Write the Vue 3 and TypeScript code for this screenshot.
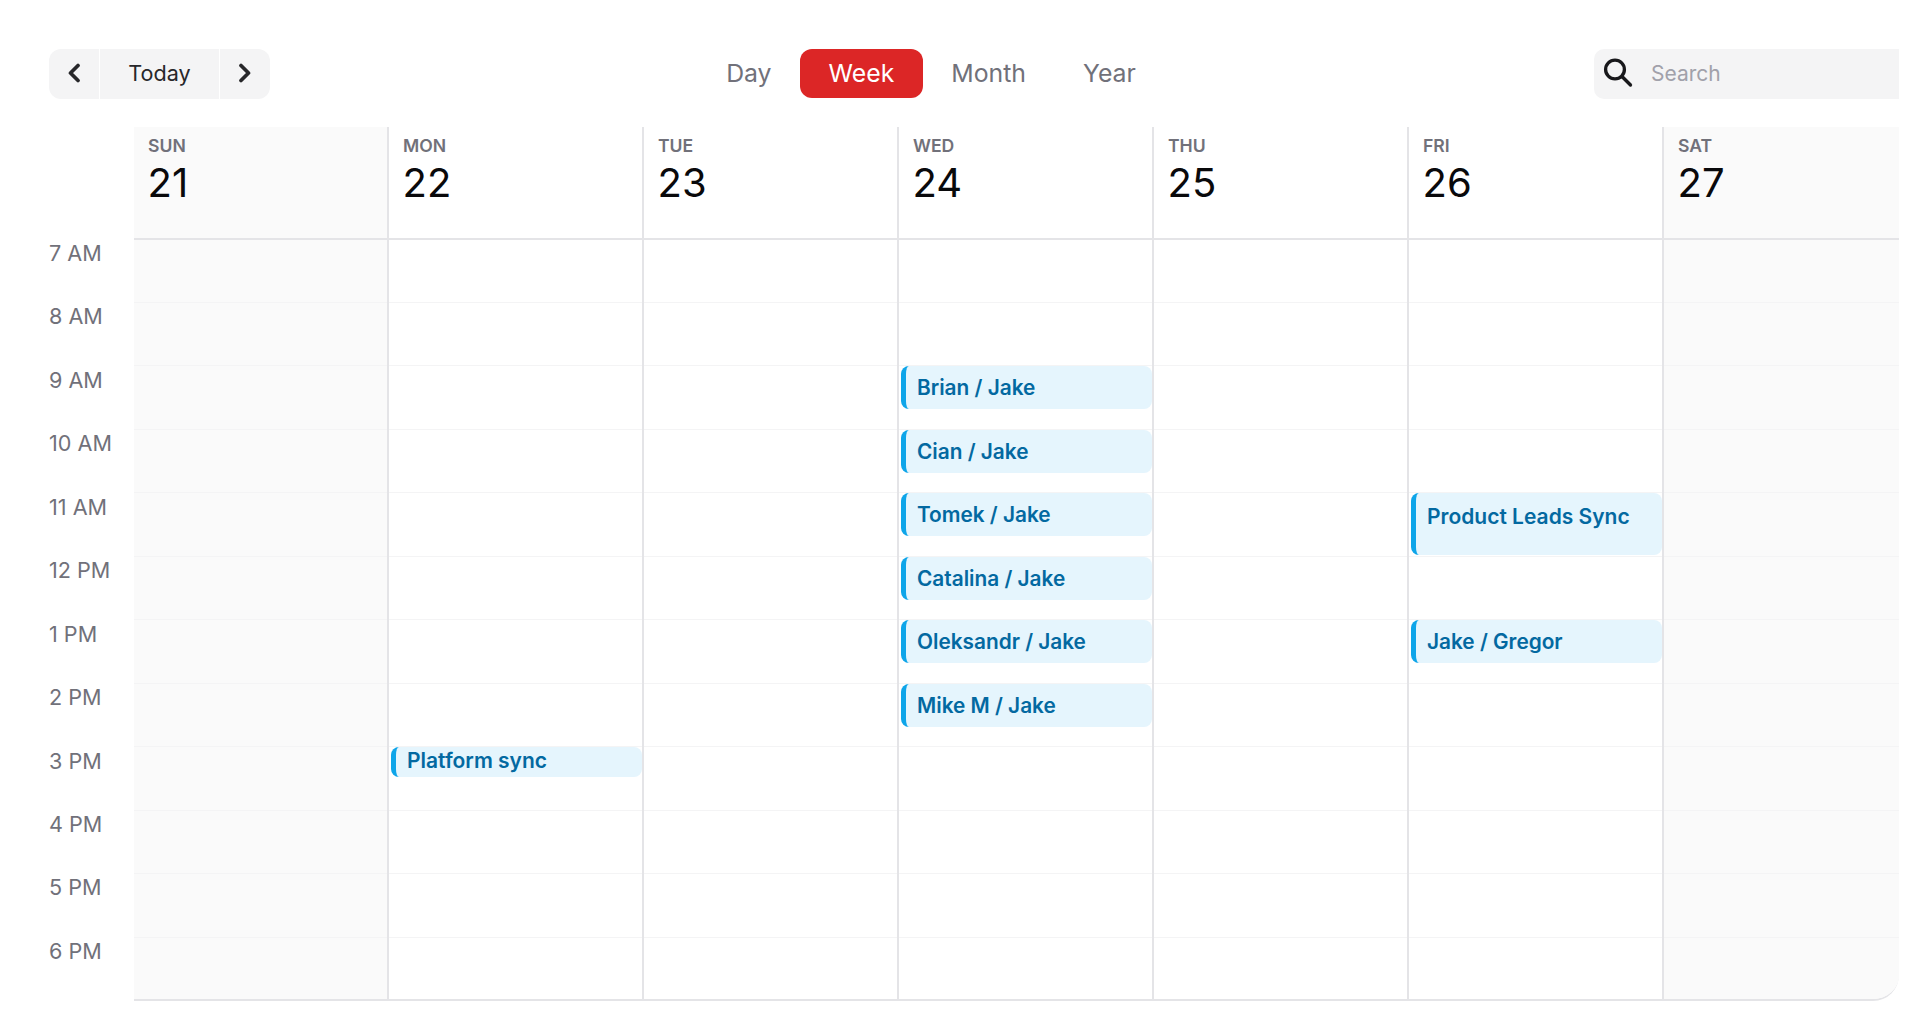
<script setup lang="ts">
interface CalEvent { title: string; size?: 'small' | 'tall' }
interface Day { name: string; date: number; weekend?: boolean; events: Record<number, CalEvent> }

const hours: string[] = ['7 AM','8 AM','9 AM','10 AM','11 AM','12 PM','1 PM','2 PM','3 PM','4 PM','5 PM','6 PM']
const tabs: string[] = ['Day','Week','Month','Year']

const days: Day[] = [
  { name: 'SUN', date: 21, weekend: true, events: {} },
  { name: 'MON', date: 22, events: { 8: { title: 'Platform sync', size: 'small' } } },
  { name: 'TUE', date: 23, events: {} },
  { name: 'WED', date: 24, events: {
    2: { title: 'Brian / Jake' }, 3: { title: 'Cian / Jake' }, 4: { title: 'Tomek / Jake' },
    5: { title: 'Catalina / Jake' }, 6: { title: 'Oleksandr / Jake' }, 7: { title: 'Mike M / Jake' }
  } },
  { name: 'THU', date: 25, events: {} },
  { name: 'FRI', date: 26, events: { 4: { title: 'Product Leads Sync', size: 'tall' }, 6: { title: 'Jake / Gregor' } } },
  { name: 'SAT', date: 27, weekend: true, events: {} }
]
</script>

<template>
  <div class="page">
    <header class="toolbar">
      <div class="nav">
        <button class="nav-btn arrow" aria-label="Previous">
          <svg width="14" height="20" viewBox="0 0 14 20" fill="none"><path d="M11 2.5 3.5 10l7.5 7.5" stroke="#27272a" stroke-width="3.7" stroke-linecap="round" stroke-linejoin="round"/></svg>
        </button>
        <button class="nav-btn today">Today</button>
        <button class="nav-btn arrow" aria-label="Next">
          <svg width="14" height="20" viewBox="0 0 14 20" fill="none"><path d="M3 2.5 10.5 10 3 17.5" stroke="#27272a" stroke-width="3.7" stroke-linecap="round" stroke-linejoin="round"/></svg>
        </button>
      </div>
      <nav class="tabs">
        <button v-for="t in tabs" :key="t" class="tab" :class="{ active: t === 'Week' }">{{ t }}</button>
      </nav>
      <label class="search">
        <svg width="32" height="32" viewBox="0 0 32 32" fill="none"><circle cx="13" cy="12.5" r="9.4" stroke="#18181b" stroke-width="3.3"/><path d="m20.5 20 8 8" stroke="#18181b" stroke-width="3.3" stroke-linecap="round"/></svg>
        <input class="search-input" type="text" placeholder="Search" />
      </label>
    </header>

    <section class="calendar">
      <div class="gutter">
        <div v-for="h in hours" :key="h" class="time">{{ h }}</div>
      </div>
      <div class="days">
        <div v-for="d in days" :key="d.name" class="day" :class="{ weekend: d.weekend }">
          <div class="day-head">
            <div class="day-name">{{ d.name }}</div>
            <div class="day-date">{{ d.date }}</div>
          </div>
          <div v-for="(h, i) in hours" :key="h" class="cell">
            <div v-if="d.events[i]" class="event" :class="d.events[i].size">{{ d.events[i].title }}</div>
          </div>
        </div>
      </div>
    </section>
  </div>
</template>

<style>
html, body { margin: 0; background: #fff; }
</style>

<style scoped>
.page {
  height: 1022px;
  box-sizing: border-box;
  padding: 49px 21px 0 49px;
  overflow: hidden;
  font-family: Inter, "Liberation Sans", sans-serif;
}
button { font-family: inherit; border: 0; cursor: pointer; }
.toolbar {
  display: flex;
  justify-content: space-between;
  align-items: flex-start;
  height: 50px;
  margin-bottom: 28px;
}
.nav {
  display: flex;
  width: 221px;
  height: 50px;
  gap: 1px;
  border-radius: 12px;
  overflow: hidden;
}
.nav-btn {
  display: flex;
  align-items: center;
  justify-content: center;
  padding: 0 0 2px;
  background: #f4f4f5;
  color: #27272a;
  font-size: 21.6px;
}
.arrow { width: 50px; }
.today { flex: 1; }
.tabs { display: flex; margin-left: -2px; }
.tab {
  height: 49px;
  padding: 0 28.5px 1px;
  background: none;
  border-radius: 12px;
  color: #71717a;
  font-size: 24.8px;
}
.tab.active { background: #dc2626; color: #fff; }
.search {
  display: flex;
  align-items: center;
  gap: 17px;
  width: 305px;
  height: 50px;
  box-sizing: border-box;
  padding: 0 0 2px 8px;
  background: #f4f4f5;
  border-radius: 10px 0 0 10px;
}
.search-input {
  flex: 1;
  min-width: 0;
  border: 0;
  outline: 0;
  background: none;
  padding: 0;
  font: 400 21px Inter, "Liberation Sans", sans-serif;
  color: #27272a;
}
.search-input::placeholder { color: #a1a1aa; opacity: 1; }
.calendar { display: flex; }
.gutter { width: 85px; padding-top: 111px; flex: none; }
.time {
  height: 63.45px;
  line-height: 30px;
  font-size: 21.6px;
  color: #71717a;
  white-space: nowrap;
}
.days {
  flex: 1;
  display: grid;
  grid-template-columns: repeat(6, 255px) 1fr;
  height: 874px;
  box-sizing: border-box;
  border-bottom: 2px solid #e4e4e7;
  border-bottom-right-radius: 26px;
  overflow: hidden;
}
.day { border-right: 2px solid #e4e4e7; }
.day:last-child { border-right: 0; }
.weekend { background: #fafafa; }
.day-head {
  height: 113px;
  box-sizing: border-box;
  padding: 6px 14px 0;
  border-bottom: 2px solid #e4e4e7;
}
.day-name {
  font-size: 17.6px;
  line-height: 25px;
  font-weight: 600;
  color: #71717a;
}
.day-date {
  font-size: 40px;
  line-height: 50px;
  margin-left: -0.5px;
  color: #09090b;
}
.cell {
  height: 63.5px;
  box-sizing: border-box;
  border-top: 1px solid #f4f4f5;
}
.day-head + .cell { height: 61.5px; border-top: 0; }
.event {
  height: 43px;
  box-sizing: border-box;
  margin-left: 2px;
  padding-left: 11px;
  border-left: 5px solid #0ea5e9;
  border-radius: 8px;
  background: #e5f5fd;
  color: #0369a1;
  font-size: 20.8px;
  font-weight: 600;
  line-height: 43px;
  white-space: nowrap;
}
.event.small { height: 30px; line-height: 27px; font-size: 21px; }
.event.tall { height: 62px; line-height: 48px; font-size: 21px; }
</style>
